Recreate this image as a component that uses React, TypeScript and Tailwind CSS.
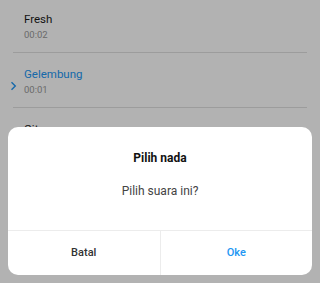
const tones = [
  { name: "Fresh", time: "00:02", active: false },
  { name: "Gelembung", time: "00:01", active: true },
  { name: "Gitar", time: "00:03", active: false },
  { name: "Harpa", time: "00:02", active: false },
];

export default function App() {
  return (
    <div className="relative h-[283px] w-[320px] overflow-hidden bg-white font-['Roboto',sans-serif]">
      <div className="-mt-[2px] px-[13px]">
        {tones.map((t) => (
          <div key={t.name} className="relative h-[55px] border-b border-[#e0e0e0] pl-[11px] pt-[13px]">
            {t.active && (
              <svg className="absolute -left-[3px] top-[28px]" width="7" height="10" viewBox="0 0 7 10" fill="none">
                <path d="M1.5 1.2 5.3 5 1.5 8.8" stroke="#2196f3" strokeWidth="1.4" />
              </svg>
            )}
            <div className={`text-[11.5px] leading-[17px] ${t.active ? "text-[#2196f3]" : "text-[#1a1a1a]"}`}>{t.name}</div>
            <div className="text-[9.5px] leading-[13px] text-[#999]">{t.time}</div>
          </div>
        ))}
      </div>

      <div className="absolute inset-0 flex items-end justify-center bg-black/30 px-[8px] pb-[8px]">
        <div className="w-full overflow-hidden rounded-[10px] bg-white">
          <div className="flex flex-col items-center pt-[23px] pb-[31px]">
            <div className="text-[12px] font-bold leading-[16px] text-[#111]">Pilih nada</div>
            <div className="mt-[17px] text-[12px] leading-[16px] text-[#444]">Pilih suara ini?</div>
          </div>
          <div className="flex h-[45px] border-t border-[#ececec]">
            <button className="flex-1 border-r border-[#ececec] pt-[1px] text-[11px] font-medium text-[#333]">Batal</button>
            <button className="flex-1 pt-[1px] text-[11px] font-medium text-[#2196f3]">Oke</button>
          </div>
        </div>
      </div>
    </div>
  );
}
